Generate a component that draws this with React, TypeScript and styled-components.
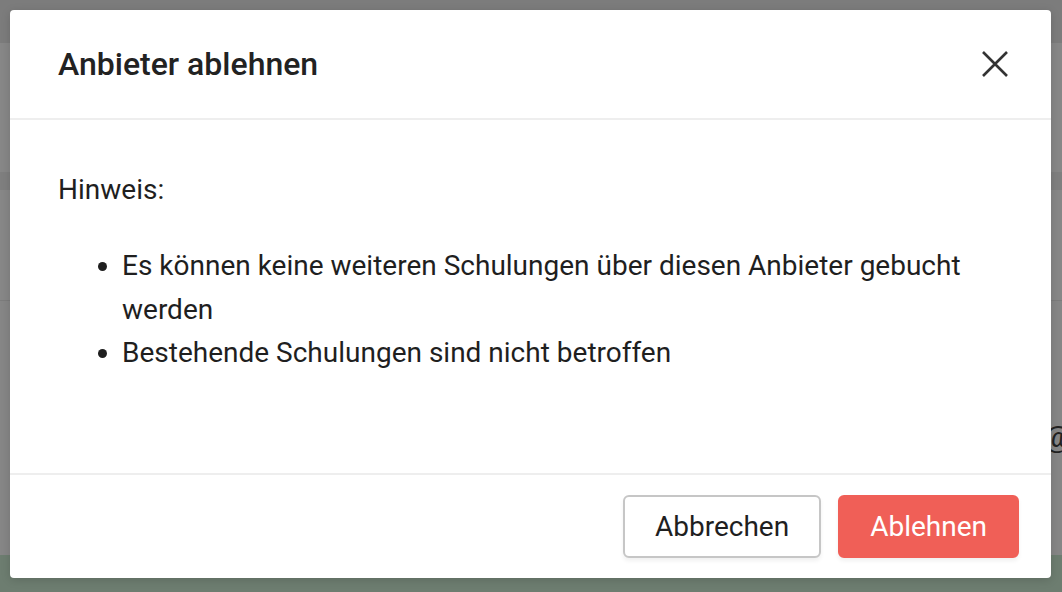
import styled, { createGlobalStyle } from 'styled-components';

const GlobalStyle = createGlobalStyle`
  html, body {
    margin: 0;
    padding: 0;
    width: 100%;
    height: 100%;
    overflow: hidden;
  }

  body {
    font-family: Roboto, 'Liberation Sans', sans-serif;
    color: #1f1f1f;
  }
`;

// Faded page behind the dialog
const Page = styled.div`
  position: relative;
  width: 1062px;
  height: 592px;
  display: flex;
  flex-direction: column;
  background: #868686;
  overflow: hidden;
`;

const Band = styled.div<{ h: number; bg: string; line?: boolean }>`
  flex: 0 0 ${({ h }) => h}px;
  background: ${({ bg }) => bg};
  border-bottom: ${({ line }) => (line ? '1px solid #7c7c7c' : 'none')};
`;

const Filler = styled.div`
  flex: 1;
  display: flex;
  justify-content: flex-end;
  align-items: center;
`;

const AtSign = styled.span`
  font-size: 30px;
  color: #222;
  margin-right: -9px;
  margin-top: 16px;
`;

const GreenBar = styled.div`
  flex: 0 0 37px;
  background: #6d7d70;
`;

// Dialog
const Overlay = styled.div`
  position: absolute;
  inset: 10px 11px 14px 10px;
  display: flex;
  flex-direction: column;
  background: #fff;
  border-radius: 4px;
  box-shadow: 0 2px 10px rgba(0, 0, 0, 0.15);
`;

const Header = styled.header`
  flex: 0 0 108px;
  display: flex;
  align-items: center;
  justify-content: space-between;
  padding: 0 40px 0 48px;
  border-bottom: 2px solid #eeeeee;
`;

const Title = styled.h2`
  margin: 0;
  font: 500 32px Roboto, 'Liberation Sans', sans-serif;
  color: #222;
`;

const CloseButton = styled.button`
  display: flex;
  align-items: center;
  justify-content: center;
  width: 32px;
  height: 32px;
  padding: 0;
  border: none;
  background: none;
  cursor: pointer;
`;

const Body = styled.div`
  flex: 1;
  padding: 48px 48px 0 48px;
  font: 400 28px Roboto, 'Liberation Sans', sans-serif;
  color: #1f1f1f;
`;

const Note = styled.p`
  margin: 0;
  line-height: 43px;
`;

const List = styled.ul`
  margin: 33px 0 0 0;
  padding-left: 64px;
  line-height: 43.5px;
`;

const Footer = styled.footer`
  flex: 0 0 105px;
  display: flex;
  align-items: center;
  justify-content: flex-end;
  gap: 17px;
  padding: 0 32px;
  border-top: 2px solid #eeeeee;
  box-sizing: border-box;
`;

const Button = styled.button<{ danger?: boolean }>`
  height: 63px;
  padding: 0 30px;
  border-radius: 6px;
  font: 400 28px Roboto, 'Liberation Sans', sans-serif;
  cursor: pointer;
  box-shadow: 0 3px 4px rgba(0, 0, 0, 0.06);
  border: 2px solid ${({ danger }) => (danger ? '#f05f57' : '#c6c6c6')};
  background: ${({ danger }) => (danger ? '#f05f57' : '#fff')};
  color: ${({ danger }) => (danger ? '#fff' : '#1f1f1f')};
`;

const App = () => {
  return (
    <>
      <GlobalStyle />
      <Page>
        <Band h={43} bg="#7c7c7c" />
        <Band h={129} bg="#878787" />
        <Band h={18} bg="#7f7f7f" />
        <Band h={110} bg="#878787" line />
        <Filler>
          <AtSign>@</AtSign>
        </Filler>
        <GreenBar />

        <Overlay>
          <Header>
            <Title>Anbieter ablehnen</Title>
            <CloseButton aria-label="Schließen">
              <svg width="26" height="26" viewBox="0 0 26 26">
                <path d="M1 1L25 25M25 1L1 25" stroke="#333" strokeWidth="2.6" />
              </svg>
            </CloseButton>
          </Header>
          <Body>
            <Note>Hinweis:</Note>
            <List>
              <li>Es können keine weiteren Schulungen über diesen Anbieter gebucht werden</li>
              <li>Bestehende Schulungen sind nicht betroffen</li>
            </List>
          </Body>
          <Footer>
            <Button>Abbrechen</Button>
            <Button danger>Ablehnen</Button>
          </Footer>
        </Overlay>
      </Page>
    </>
  );
};

export default App;
